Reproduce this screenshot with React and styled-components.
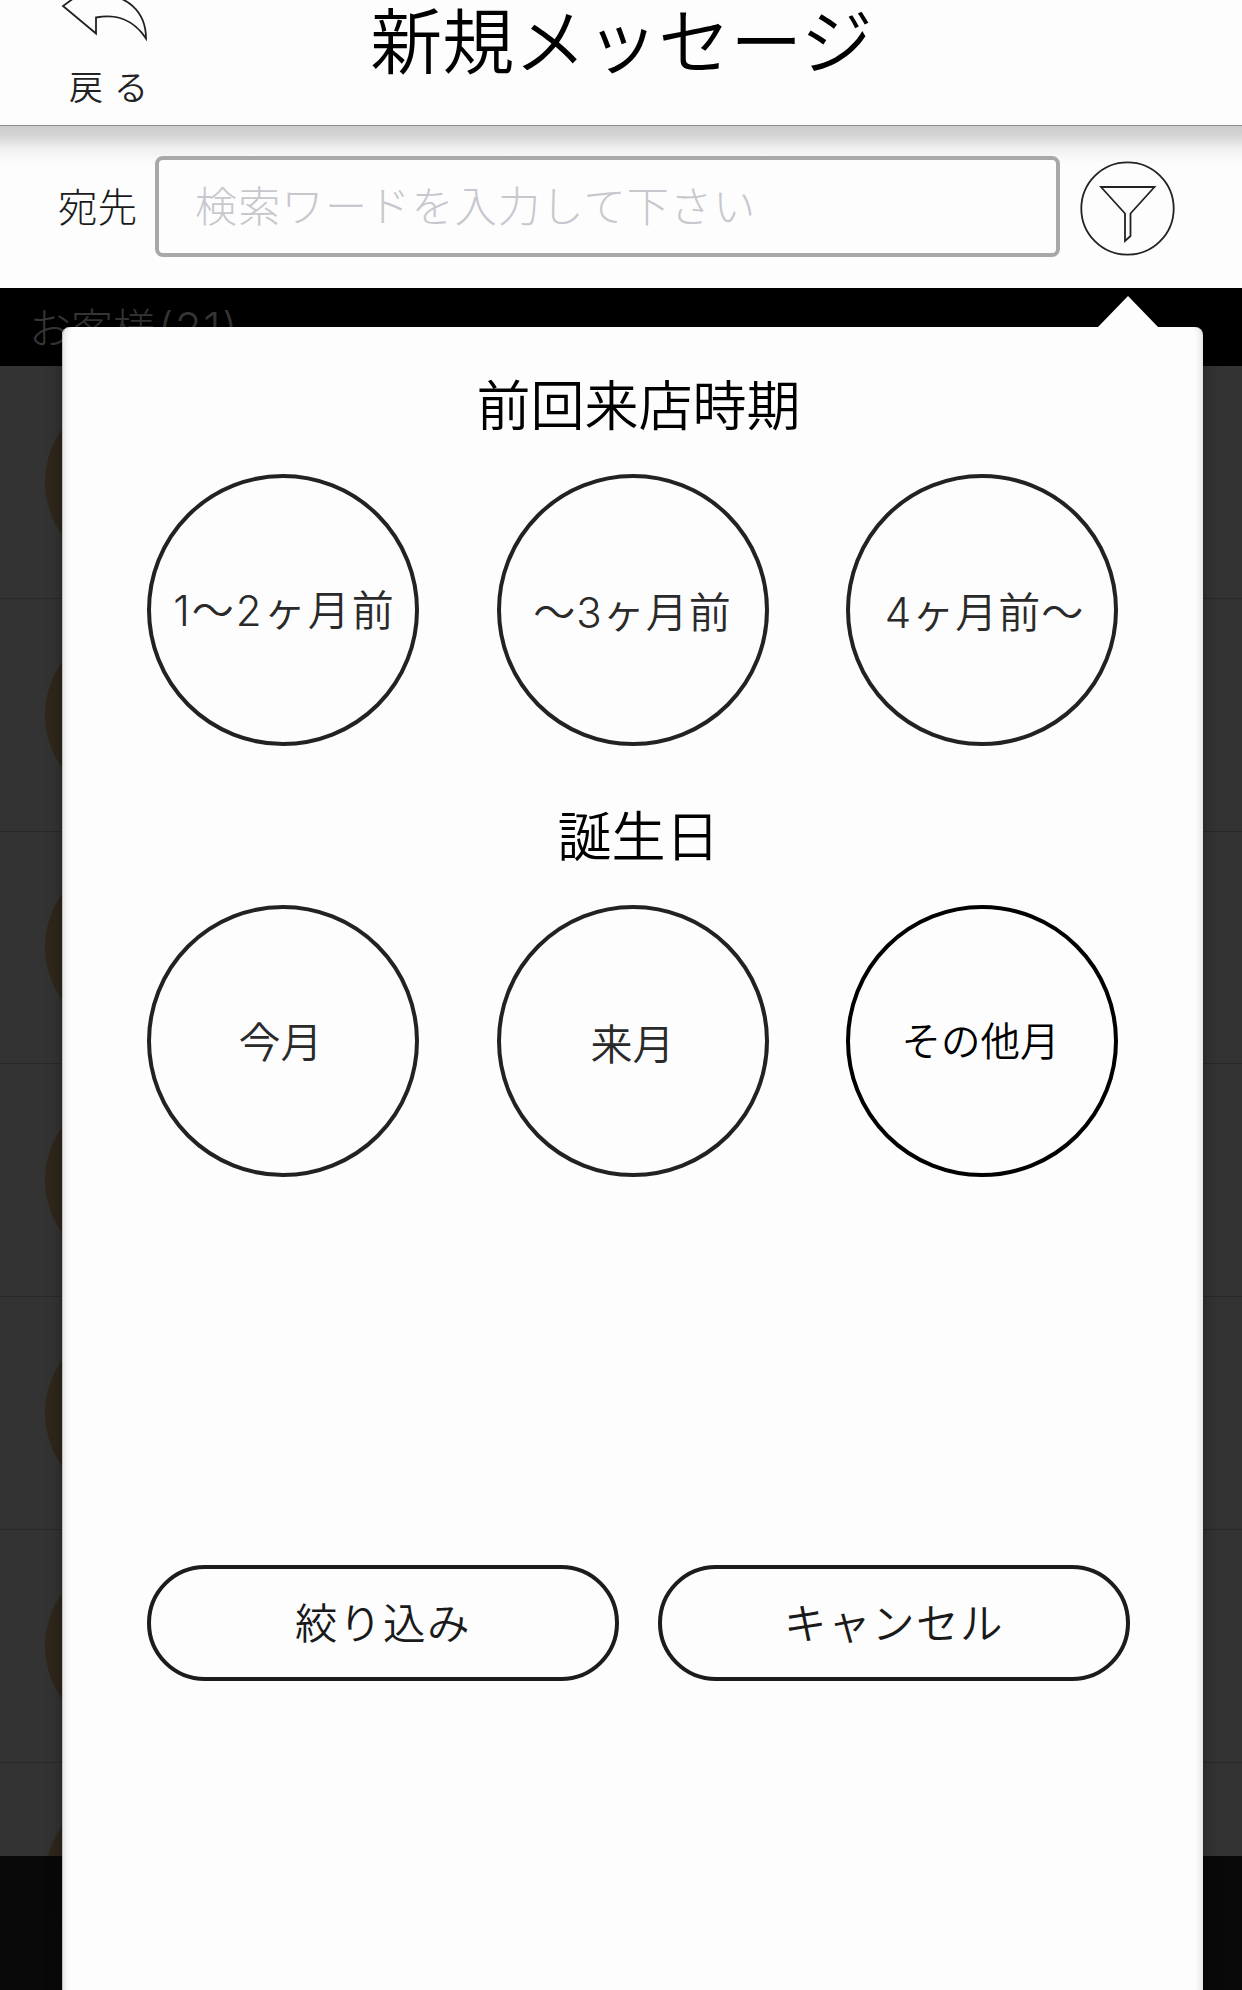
import styled, { createGlobalStyle } from 'styled-components';
import clsx from 'clsx';
import { useState } from 'react';

const GlobalStyle = createGlobalStyle`
  * {
    box-sizing: border-box;
  }

  body {
    margin: 0;
    background: #fdfdfd;
    font-family: 'Noto Sans CJK JP', sans-serif;
    font-weight: 300;
    color: #000;
  }

  button {
    padding: 0;
    border: 0;
    background: none;
    font-family: inherit;
    font-weight: inherit;
    color: inherit;
  }
`;

const StyledPage = styled.div`
  width: 1242px;
  height: 1990px;
  overflow: hidden;
  display: flex;
  flex-direction: column;
`;

const StyledHeader = styled.header`
  height: 126px;
  flex-shrink: 0;
  display: grid;
  grid-template-columns: 209px 1fr 209px;
  border-bottom: 1px solid #8c8c8c;

  .btn-back {
    display: flex;
    flex-direction: column;
    align-items: flex-start;
    padding-left: 61px;
  }

  .btn-back-text {
    margin: 20px 0 0 8px;
    font-size: 34px;
    line-height: 50px;
    letter-spacing: 11px;
    font-weight: 350;
    color: #222;
    white-space: nowrap;
  }

  .title {
    margin: 0;
    padding: 1px 0 0 1px;
    text-align: center;
    font-size: 72px;
    line-height: 72px;
    font-weight: 350;
    white-space: nowrap;
  }
`;

const StyledSearchBar = styled.div`
  height: 162px;
  flex-shrink: 0;
  display: flex;
  align-items: flex-start;
  padding: 30px 0 0 58px;
  background: linear-gradient(#cdcdcd, #d2d2d2 8px, #f0f0f0 23px, #fdfdfd 38px);

  .label {
    width: 97px;
    color: #1a1a1a;
    font-size: 39.5px;
    line-height: 98px;
    white-space: nowrap;
  }

  .search-input {
    width: 905px;
    height: 101px;
    padding: 0 0 6px 36px;
    border: 4px solid #a8a8a8;
    border-radius: 8px;
    outline: 0;
    background: #fdfdfd;
    font-family: inherit;
    font-weight: 300;
    font-size: 42px;
    letter-spacing: 1.3px;

    &::placeholder {
      color: #c7c7cd;
      opacity: 1;
    }
  }

  .btn-filter {
    margin: 4px 0 0 20px;
    height: 96px;
  }
`;

const StyledMain = styled.main`
  flex: 1;
  position: relative;
  display: flex;
  flex-direction: column;
  background: #333;
  overflow: hidden;
`;

const StyledListTitle = styled.div`
  height: 78px;
  flex-shrink: 0;
  padding-left: 29px;
  background: #000;
  color: #363636;
  font-size: 42px;
  line-height: 76px;

  .count {
    margin-left: 3px;
    font-family: Inter, sans-serif;
    font-size: 44px;
    letter-spacing: 1.5px;
  }
`;

const StyledCustomerRow = styled.div`
  height: 232.8px;
  flex-shrink: 0;
  display: flex;
  align-items: center;
  padding-left: 45px;
  border-bottom: 1px solid #28282d;

  .avatar {
    width: 180px;
    height: 180px;
    border-radius: 50%;
    background: #2f271b;
  }
`;

const StyledFooter = styled.div`
  position: absolute;
  left: 0;
  right: 0;
  bottom: 0;
  height: 134px;
  background: rgba(6, 6, 6, 0.93);
`;

const StyledPopover = styled.section`
  position: absolute;
  top: 39px;
  left: 62px;
  width: 1141px;
  height: 1700px;
  padding: 30px 73px 0 85px;
  border-radius: 8px;
  background: #fdfdfd;
  box-shadow: 0 0 16px rgba(0, 0, 0, 0.35), inset 1px 0 0 #bdbdbd,
    inset 9px 0 7px -7px rgba(0, 0, 0, 0.14),
    inset -9px 0 7px -7px rgba(0, 0, 0, 0.14);

  /* 指向篩選按鈕的三角形 */
  &::before {
    content: '';
    position: absolute;
    top: -31px;
    right: 44.5px;
    border: solid transparent;
    border-width: 0 31.5px 32px;
    border-bottom-color: #fdfdfd;
  }

  .section-title {
    margin: 0;
    height: 116px;
    text-align: center;
    font-size: 54px;
    line-height: 91px;
    font-weight: 350;
  }
`;

const StyledOptions = styled.div`
  display: flex;
  gap: 77.5px;
  margin-top: 1px;
  margin-bottom: 42px;
`;

const StyledOption = styled.button`
  width: 272px;
  height: 272px;
  flex-shrink: 0;
  display: flex;
  align-items: center;
  justify-content: center;
  padding: 0 ${({ $right }) => $right || 0}px ${({ $bottom }) => $bottom || 0}px
    ${({ $left }) => $left || 0}px;
  border: 4px solid #222;
  border-radius: 50%;
  color: #2a2a2a;
  font-family: Inter, 'Noto Sans CJK JP', sans-serif;
  font-weight: 350;
  font-size: ${({ $size }) => $size || 42}px;
  letter-spacing: ${({ $spacing }) => $spacing || 0}px;
  white-space: nowrap;

  &.strong {
    border-color: #000;
    color: #000;
  }
`;

const StyledActions = styled.div`
  display: flex;
  gap: 39px;
  margin-top: 388px;
`;

const StyledAction = styled.button`
  width: 472px;
  height: 116px;
  padding-bottom: 6px;
  border: 4px solid #1c1c1c;
  border-radius: 58px;
  color: #1a1a1a;
  font-weight: 350;
  font-size: 42.5px;
  letter-spacing: 1.5px;
`;

const visitOptions = [
  { id: 'v1', label: '1〜2ヶ月前', spacing: 2, left: 3, bottom: 5 },
  { id: 'v2', label: '〜3ヶ月前', spacing: 1, bottom: 1 },
  { id: 'v3', label: '4ヶ月前〜', spacing: 1, left: 5, bottom: 1 },
];

const birthdayOptions = [
  { id: 'b1', label: '今月', right: 5, bottom: 4 },
  { id: 'b2', label: '来月' },
  { id: 'b3', label: 'その他月', size: 39.5, right: 3, bottom: 6, strong: true },
];

const BackIcon = () => (
  <svg width="88" height="41" viewBox="61 0 88 41" fill="none" stroke="#222" strokeWidth="1.8">
    <path d="M96 -18L63 6L96 33.5V17.5C116 13.5 134 20 146 38.5C146 12 128 -6 96 -6Z" />
  </svg>
);

const FilterIcon = () => (
  <svg width="96" height="96" viewBox="0 0 96 96" fill="none" stroke="#222" strokeWidth="1.8">
    <circle cx="47.5" cy="48.5" r="46.2" />
    <path d="M21 27H74.5L50.5 53.5V76L45 81V53.5Z" />
  </svg>
);

const OptionGroup = ({ title, options, onSelect }) => (
  <>
    <h2 className="section-title">{title}</h2>
    <StyledOptions>
      {options.map(({ id, label, size, spacing, left, right, bottom, strong }) => (
        <StyledOption
          key={id}
          className={clsx('', { strong })}
          $size={size}
          $spacing={spacing}
          $left={left}
          $right={right}
          $bottom={bottom}
          onClick={() => onSelect?.(id)}
        >
          {label}
        </StyledOption>
      ))}
    </StyledOptions>
  </>
);

const App = () => {
  const [keyword, setKeyword] = useState('');
  const [, setSelected] = useState(null);

  return (
    <StyledPage>
      <GlobalStyle />
      <StyledHeader>
        <button className="btn-back">
          <BackIcon />
          <span className="btn-back-text">戻る</span>
        </button>
        <h1 className="title">新規メッセージ</h1>
      </StyledHeader>
      <StyledSearchBar>
        <span className="label">宛先</span>
        <input
          className="search-input"
          placeholder="検索ワードを入力して下さい"
          value={keyword}
          onChange={(event) => setKeyword(event.target.value)}
        />
        <button className="btn-filter">
          <FilterIcon />
        </button>
      </StyledSearchBar>
      <StyledMain>
        <StyledListTitle>
          お客様<span className="count">(21)</span>
        </StyledListTitle>
        {[1, 2, 3, 4, 5, 6, 7].map((id) => (
          <StyledCustomerRow key={id}>
            <div className="avatar" />
          </StyledCustomerRow>
        ))}
        <StyledFooter />
        <StyledPopover>
          <OptionGroup title="前回来店時期" options={visitOptions} onSelect={setSelected} />
          <OptionGroup title="誕生日" options={birthdayOptions} onSelect={setSelected} />
          <StyledActions>
            <StyledAction>絞り込み</StyledAction>
            <StyledAction>キャンセル</StyledAction>
          </StyledActions>
        </StyledPopover>
      </StyledMain>
    </StyledPage>
  );
};

export default App;
